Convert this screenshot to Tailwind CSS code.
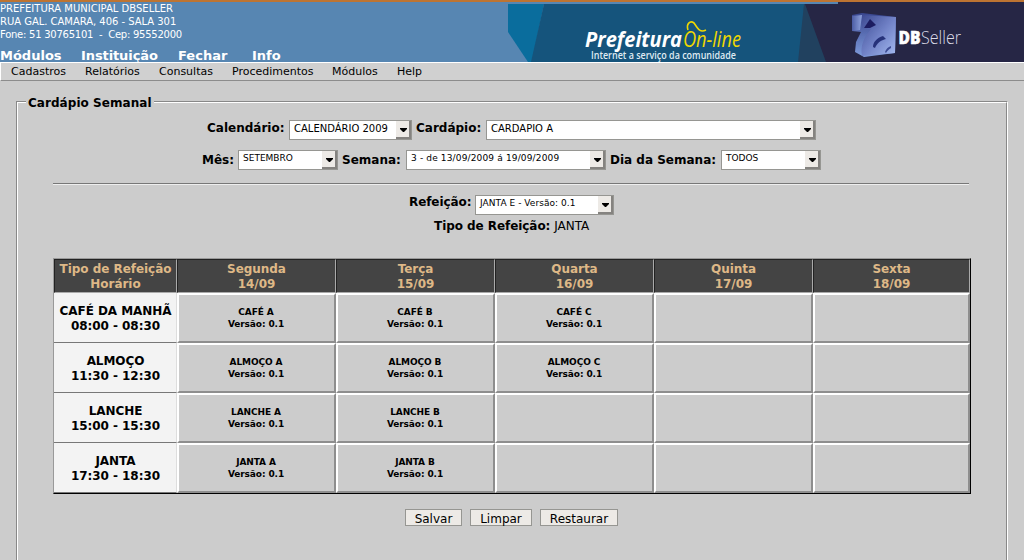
<!DOCTYPE html>
<html lang="pt-BR">
<head>
<meta charset="utf-8">
<title>Cardápio Semanal</title>
<script src="https://cdn.jsdelivr.net/npm/@tailwindcss/browser@4"></script>
</head>
<body class="h-[560px] w-[1024px] overflow-hidden bg-[#cccccc] font-['DejaVu_Sans',sans-serif] text-[12px] text-black">
<header class="flex h-[62px] justify-between border-t-2 border-[#bd7432] bg-[#5786b2] text-white">
  <div class="w-[508px] whitespace-nowrap">
    <div class="h-[45px] text-[10px] leading-[13px]">
      <p>PREFEITURA MUNICIPAL DBSELLER</p>
      <p class="tracking-[-0.03px]">RUA GAL. CAMARA, 406 - SALA 301</p>
      <p class="tracking-[-0.25px]">Fone: 51 30765101 &nbsp;- &nbsp;Cep: 95552000</p>
    </div>
    <nav class="flex text-[13px] font-bold leading-[17px]">
      <span class="w-[81px]">Módulos</span><span class="w-[97px] tracking-[-0.1px]">Instituição</span><span class="w-[74px]">Fechar</span><span>Info</span>
    </nav>
  </div>
  <svg class="h-[60px] w-[516px]" viewBox="508 2 516 60">
    <defs>
      <linearGradient id="cube" x1="0" y1="0" x2="1" y2="1"><stop offset="0" stop-color="#3d4a92"/><stop offset=".5" stop-color="#7081c6"/><stop offset="1" stop-color="#a4baf0"/></linearGradient>
      <linearGradient id="side" x1="0" y1="0" x2="0" y2="1"><stop offset="0" stop-color="#38458e"/><stop offset="1" stop-color="#7f9cdc"/></linearGradient>
      <linearGradient id="face" x1="0" y1="0" x2="1" y2="0"><stop offset="0" stop-color="#4c5ca4"/><stop offset="1" stop-color="#8fa2dc"/></linearGradient>
      <filter id="soft"><feGaussianBlur stdDeviation=".7"/></filter>
    </defs>
    <path d="M508 4H544L532 62H528L508 32Z" fill="#0a6d9d"/>
    <path d="M544 4H805L800 62H531Z" fill="#15547c"/>
    <path d="M804 4L798 62H827L806 4Z" fill="#21415f"/>
    <path d="M805 4H838V2H1024V62H826Z" fill="#262645"/>
    <text x="585" y="47" font-family="Open Sans, sans-serif" font-size="21" font-weight="700" font-style="italic" fill="#fff" textLength="97" lengthAdjust="spacingAndGlyphs">Prefeitura</text>
    <text x="683" y="47" font-family="Open Sans, sans-serif" font-size="21" font-style="italic" fill="#f0d800" textLength="58" lengthAdjust="spacingAndGlyphs">On-line</text>
    <path d="M688 30C686 24 690 20 694 23C698 29 700 33 706 30" fill="none" stroke="#f0d800" stroke-width="1.6"/>
    <text x="591" y="58.500" font-family="Open Sans, sans-serif" font-size="10" font-weight="600" fill="#dfeaf2" textLength="145" lengthAdjust="spacingAndGlyphs">Internet a serviço da comunidade</text>
    <g filter="url(#soft)">
      <path d="M852 15L862 13L896 17L895 53L864 57L855 52L856 42L861 32L852 31Z" fill="url(#side)"/>
      <path d="M862 15L896 17L895 53L862 56C860 46 864 37 871 29L862 28Z" fill="url(#cube)"/>
      <path d="M852 16L862 15L860 30L852 31Z" fill="url(#face)"/>
      <path d="M870 19L876 25L870 28L864 28Z" fill="#1d1c61"/>
      <path d="M873 47C873 42 877 38 883 36L886 39C881 40 877 43 875 48Z" fill="#27317a"/>
      <path d="M885 52C886 49 888 47 891 46L891 48C889 49 887 51 886 53Z" fill="#3c4b93"/>
    </g>
    <text x="898.500" y="43.500" font-family="Open Sans, sans-serif" font-size="18" font-weight="800" fill="#fff" stroke="#fff" stroke-width=".5" textLength="22" lengthAdjust="spacingAndGlyphs">DB</text>
    <text x="921" y="43.500" font-family="Open Sans, sans-serif" font-size="18" font-weight="300" fill="#dcdce8" textLength="40" lengthAdjust="spacingAndGlyphs">Seller</text>
  </svg>
</header>
<nav class="flex h-[19px] border-b border-l border-t border-b-[#8c8c8c] border-l-white border-t-white bg-[#d0d0d0] pl-[10px] text-[11px] leading-[17px]">
  <span class="w-[74px]">Cadastros</span><span class="w-[74px]">Relatórios</span><span class="w-[73px]">Consultas</span><span class="w-[100px]">Procedimentos</span><span class="w-[65px]">Módulos</span><span>Help</span>
</nav>
<main class="px-4 pt-5">
  <section class="h-[470px] w-[992px] border-l border-r border-t border-l-[#888] border-r-white border-t-[#888]">
    <div class="h-full border-l border-r border-t border-l-white border-r-[#888] border-t-white">
      <h1 class="-mt-[9px] ml-[8px] h-[18px] w-[128px] whitespace-nowrap bg-[#cccccc] px-[2px] leading-[18px] font-bold tracking-[0.05px]">Cardápio Semanal</h1>
      <div class="mt-[8px] flex h-[20px] whitespace-nowrap pl-[189px]">
        <b class="w-[82px] leading-[17px]">Calendário:</b>
        <div class="flex h-[20px] w-[123px] justify-between border border-[#969692] bg-white pl-1 text-[10px] leading-[15px]"><span>CALENDÁRIO 2009</span><i class="flex h-[18px] w-[15px] items-center justify-center border-b-2 border-r-2 border-[#858380] bg-[#edeae6] pl-[2px] pt-[2px]"><svg class="h-1 w-[7px]" viewBox="0 0 7 4"><path d="M0 0H7V1L4 4H3L0 1Z"/></svg></i></div>
        <b class="ml-1 w-[70px] leading-[17px]">Cardápio:</b>
        <div class="flex h-[20px] w-[330px] justify-between border border-[#969692] bg-white pl-1 text-[10px] leading-[15px]"><span>CARDAPIO A</span><i class="flex h-[18px] w-[15px] items-center justify-center border-b-2 border-r-2 border-[#858380] bg-[#edeae6] pl-[2px] pt-[2px]"><svg class="h-1 w-[7px]" viewBox="0 0 7 4"><path d="M0 0H7V1L4 4H3L0 1Z"/></svg></i></div>
      </div>
      <div class="mt-[10px] flex h-[20px] whitespace-nowrap pl-[184px]">
        <b class="w-[36px] leading-[20px]">Mês:</b>
        <div class="flex h-[20px] w-[100px] justify-between border border-[#969692] bg-white pl-1 text-[9px] leading-[14px]"><span>SETEMBRO</span><i class="flex h-[18px] w-[15px] items-center justify-center border-b-2 border-r-2 border-[#858380] bg-[#edeae6] pl-[2px] pt-[2px]"><svg class="h-1 w-[7px]" viewBox="0 0 7 4"><path d="M0 0H7V1L4 4H3L0 1Z"/></svg></i></div>
        <b class="ml-1 w-[64px] leading-[20px]">Semana:</b>
        <div class="flex h-[20px] w-[200px] justify-between border border-[#969692] bg-white pl-1 text-[9px] leading-[14px]"><span class="tracking-[0.15px]">3 - de 13/09/2009 á 19/09/2009</span><i class="flex h-[18px] w-[15px] items-center justify-center border-b-2 border-r-2 border-[#858380] bg-[#edeae6] pl-[2px] pt-[2px]"><svg class="h-1 w-[7px]" viewBox="0 0 7 4"><path d="M0 0H7V1L4 4H3L0 1Z"/></svg></i></div>
        <b class="ml-1 w-[111px] leading-[20px]">Dia da Semana:</b>
        <div class="flex h-[20px] w-[100px] justify-between border border-[#969692] bg-white pl-1 text-[9px] leading-[14px]"><span>TODOS</span><i class="flex h-[18px] w-[15px] items-center justify-center border-b-2 border-r-2 border-[#858380] bg-[#edeae6] pl-[2px] pt-[2px]"><svg class="h-1 w-[7px]" viewBox="0 0 7 4"><path d="M0 0H7V1L4 4H3L0 1Z"/></svg></i></div>
      </div>
      <hr class="ml-[35px] mt-[13px] h-[2px] w-[916px] border-b border-t border-b-[#eee] border-t-[#777]">
      <div class="mt-[10px] flex h-[20px] whitespace-nowrap pl-[391px]">
        <b class="w-[66px] leading-[15px] tracking-[-0.08px]">Refeição:</b>
        <div class="flex h-[20px] w-[139px] justify-between border border-[#969692] bg-white pl-1 text-[9px] leading-[14px]"><span class="tracking-[0.05px]">JANTA E - Versão: 0.1</span><i class="flex h-[18px] w-[15px] items-center justify-center border-b-2 border-r-2 border-[#858380] bg-[#edeae6] pl-[2px] pt-[2px]"><svg class="h-1 w-[7px]" viewBox="0 0 7 4"><path d="M0 0H7V1L4 4H3L0 1Z"/></svg></i></div>
      </div>
      <p class="mt-[3px] h-[16px] pl-[416px] leading-[16px]"><b class="tracking-[-0.06px]">Tipo de Refeição:</b> JANTA</p>
      <div class="ml-[35px] mt-[24px] grid h-[236px] w-[918px] grid-cols-[123px_159px_159px_159px_159px_1fr] grid-rows-[34px_50px_50px_50px_50px] border border-b-black border-l-[#999] border-r-black border-t-[#999] text-center font-bold leading-[15px]" id="menu-grid">
      </div>
      <div class="mt-[15px] flex h-[17px] gap-2 whitespace-nowrap pl-[387px] text-center">
        <button class="w-[57px] border border-[#969692] bg-[#edeae6] pt-[2px] leading-[15px]">Salvar</button>
        <button class="w-[62px] border border-[#969692] bg-[#edeae6] pt-[2px] leading-[15px]">Limpar</button>
        <button class="w-[78px] border border-[#969692] bg-[#edeae6] pt-[2px] leading-[15px]">Restaurar</button>
      </div>
    </div>
  </section>
</main>
<script>
const grid = document.getElementById('menu-grid');
const head = [['Tipo de Refeição','Horário'],['Segunda','14/09'],['Terça','15/09'],['Quarta','16/09'],['Quinta','17/09'],['Sexta','18/09']];
const rows = [
  ['CAFÉ DA MANHÃ','08:00 - 08:30',['CAFÉ A','CAFÉ B','CAFÉ C','','']],
  ['ALMOÇO','11:30 - 12:30',['ALMOÇO A','ALMOÇO B','ALMOÇO C','','']],
  ['LANCHE','15:00 - 15:30',['LANCHE A','LANCHE B','','','']],
  ['JANTA','17:30 - 18:30',['JANTA A','JANTA B','','','']]
];
let html = head.map(([a, b]) => `<div class="whitespace-nowrap border-b border-l border-r border-t border-b-[#aaa] border-l-[#222] border-r-[#aaa] border-t-[#222] bg-[#444] pt-[2px] tracking-[-0.04px] text-[#deb887]">${a}<br>${b}</div>`).join('');
for (const [meal, time, cells] of rows) {
  html += `<div class="whitespace-nowrap border-b border-r border-b-[#777] border-r-[#ddd] bg-[#f3f3f3] pl-[1px] pt-[11px] tracking-[-0.06px]">${meal}<br>${time}</div>`;
  html += cells.map(c => `<div class="border-2 border-b-[#8e8e8e] border-l-white border-r-[#8e8e8e] border-t-white pr-[1px] pt-[11px] text-[9px] leading-[12px] tracking-[-0.1px]">${c ? c + '<br>Versão: 0.1' : ''}</div>`).join('');
}
grid.innerHTML = html;
</script>
</body>
</html>
